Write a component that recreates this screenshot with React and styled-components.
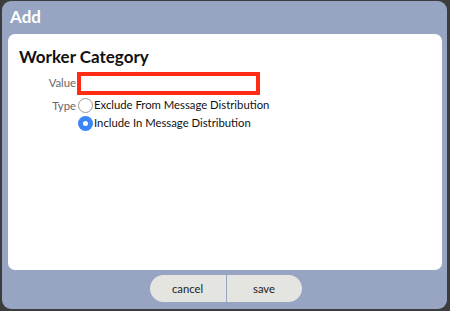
import React from "react";
import styled, { createGlobalStyle } from "styled-components";

const Global = createGlobalStyle`
  html, body { margin: 0; padding: 0; background: #3c3c3c; }
  body { font-family: Lato, "Open Sans", Arial, sans-serif; }
  * { box-sizing: border-box; }
`;

const Backdrop = styled.div`
  width: 450px;
  height: 311px;
  padding: 1px 3px 2px 2px;
`;

const Modal = styled.div`
  width: 445px;
  height: 308px;
  background: #97a5c2;
  border-radius: 9px;
  display: flex;
  flex-direction: column;
`;

const Header = styled.div`
  height: 33px;
  padding: 5px 0 0 8px;
  color: #fff;
  font-size: 17px;
  font-weight: 700;
  line-height: 22px;
`;

const Panel = styled.div`
  margin: 0 5px 0 6px;
  height: 236px;
  background: #fff;
  border-radius: 7px;
  padding: 13px 11px;
`;

const Title = styled.h2`
  margin: 0 0 5px;
  font-size: 17px;
  font-weight: 700;
  line-height: 20px;
  color: #111;
`;

const Form = styled.div`
  display: grid;
  grid-template-columns: 57px auto;
  row-gap: 2px;
  align-items: start;
`;

const Label = styled.label`
  text-align: right;
  font-size: 11.3px;
  color: #666;
  line-height: 18px;
  padding-top: ${(p) => p.$top || 0}px;
`;

const Input = styled.input`
  width: 183px;
  height: 23px;
  border: 4px solid #ff2b14;
  outline: none;
  margin: 0 0 0 1px;
  padding: 0 4px;
  font: inherit;
`;

const Options = styled.div`
  display: flex;
  flex-direction: column;
  gap: 2px;
  padding-left: 2px;
`;

const Option = styled.label`
  display: flex;
  align-items: center;
  gap: 1px;
  height: 16px;
  font-size: 11.3px;
  color: #111;
  line-height: 16px;
`;

const Radio = styled.span`
  width: 15px;
  height: 15px;
  border-radius: 50%;
  flex: none;
  display: flex;
  align-items: center;
  justify-content: center;
  border: ${(p) => (p.$checked ? "none" : "1px solid #9a9a9a")};
  background: ${(p) => (p.$checked ? "#3a86f7" : "#fff")};
  &::after {
    content: "";
    display: ${(p) => (p.$checked ? "block" : "none")};
    width: 5px;
    height: 5px;
    border-radius: 50%;
    background: #fff;
  }
`;

const Footer = styled.div`
  display: flex;
  justify-content: center;
  padding: 5px 0 0 0;
`;

const ButtonGroup = styled.div`
  display: flex;
  gap: 1px;
  margin-left: 2px;
`;

const Button = styled.button`
  width: ${(p) => p.$w}px;
  height: 27px;
  border: none;
  background: #e4e4e0;
  font-family: Lato, Arial, sans-serif;
  font-size: 11.3px;
  color: #222;
  border-radius: ${(p) => (p.$side === "left" ? "14px 0 0 14px" : "0 14px 14px 0")};
  padding: 0;
`;

export default function App() {
  return (
    <>
      <Global />
      <Backdrop>
        <Modal>
          <Header>Add</Header>
          <Panel>
            <Title>Worker Category</Title>
            <Form>
              <Label $top={2}>Value</Label>
              <Input />
              <Label $top={0}>Type</Label>
              <Options>
                <Option>
                  <Radio />
                  Exclude From Message Distribution
                </Option>
                <Option>
                  <Radio $checked />
                  Include In Message Distribution
                </Option>
              </Options>
            </Form>
          </Panel>
          <Footer>
            <ButtonGroup>
              <Button $side="left" $w={76}>cancel</Button>
              <Button $side="right" $w={75}>save</Button>
            </ButtonGroup>
          </Footer>
        </Modal>
      </Backdrop>
    </>
  );
}
